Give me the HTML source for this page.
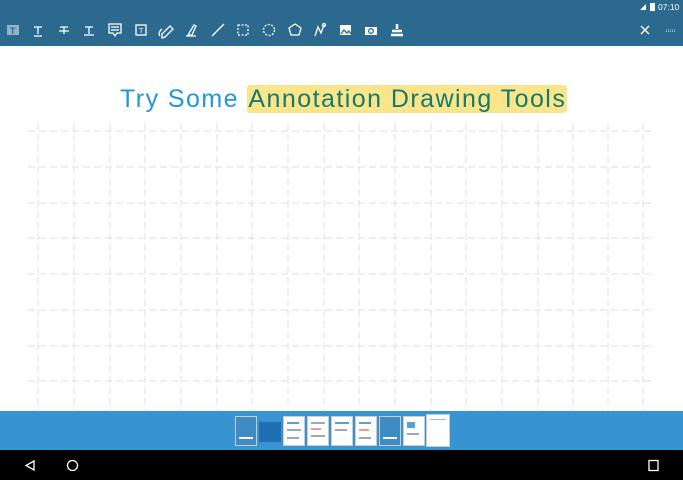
<!DOCTYPE html>
<html><head><meta charset="utf-8"><style>
*{margin:0;padding:0;box-sizing:border-box}
body{width:683px;height:480px;overflow:hidden;background:#fff;font-family:"Liberation Sans",sans-serif;position:relative}
.top{position:absolute;left:0;top:0;width:683px;height:46px;background:#2b6a8e}
.bot{position:absolute;left:0;top:411px;width:683px;height:39px;background:#3793d1}
.nav{position:absolute;left:0;top:450px;width:683px;height:30px;background:#000}
.title{position:absolute;left:120px;top:85px;font-size:25px;color:#2196d8;white-space:nowrap;letter-spacing:1.45px}
.title span{background:#fbe58b;color:#137a70;padding:0 1px;border-radius:3px}
.th{position:absolute;top:416px;height:30px;width:22px;background:#fff;border:1px solid #ccc}
.th i{position:absolute;left:3px;height:2px;background:#9ab;display:block}
</style></head><body>
<div class="top"></div>
<svg style="position:absolute;left:0;top:0" width="683" height="46" fill="none" stroke="#fff" stroke-width="1.3">
<rect x="7" y="25" width="12" height="10" fill="#8fb3c9" stroke="none"/><text x="10" y="34" fill="#2b6a8e" stroke="none" font-size="9" font-weight="bold">T</text>
<path d="M34 27h8M38 27v7M34 36h8"/>
<path d="M60 27h8M64 27v7M59 31h10"/>
<path d="M85 27h8M89 27v7M84 35h10"/>
<path d="M109 24h12v9h-4l-2 3-2-3h-4z M111 27h8M111 30h8"/>
<rect x="136" y="25" width="10" height="10"/><text x="139" y="33" fill="#fff" stroke="none" font-size="7">T</text>
<path d="M162 34l8-8 3 3-8 8-3 1z M160 36c-2-2 0-6 2-7"/>
<path d="M188 35l6-10 2 1-4 9zM186 36h10"/>
<path d="M212 36l12-12"/>
<rect x="238" y="25" width="10" height="10" stroke-dasharray="2 1.5"/>
<circle cx="269" cy="30" r="5.5" stroke-dasharray="2 1.5"/>
<path d="M295 24l6 4-2 7h-8l-2-7z"/>
<path d="M315 36l3-9 3 6 3-8" /><circle cx="324" cy="25" r="1.5"/>
<rect x="340" y="25" width="11" height="10" fill="#fff" stroke="none"/><path d="M341 34l3-4 3 3 2-2 2 3" stroke="#2b6a8e"/>
<rect x="365" y="27" width="12" height="8" fill="#fff" stroke="none"/><circle cx="371" cy="31" r="2.3" stroke="#2b6a8e"/>
<path d="M397 24v5M392 31h10M391 35h12" stroke-width="2.5"/>
<path d="M641 26l8 8M649 26l-8 8"/>
<path d="M666 30h9M666 31.5h9" stroke="#9fbfd3" stroke-width="1" stroke-dasharray="1 1"/>
<path d="M640 10l6-6v6z" fill="#fff" stroke="none"/><rect x="650" y="3" width="5" height="8" fill="#fff" stroke="none"/>
<text x="658" y="10" fill="#fff" stroke="none" font-size="8.5">07:10</text>
</svg>
<div class="title">Try Some <span>Annotation Drawing Tools</span></div>
<svg style="position:absolute;left:0;top:0" width="683" height="411" stroke="#e4e4e4" stroke-width="1.2" stroke-dasharray="7 4">
<path d="M28 131H654M28 167H654M28 203H654M28 238H654M28 274H654M28 310H654M28 346H654M28 381H654"/>
<path d="M38 123V411M74 123V411M110 123V411M145 123V411M181 123V411M217 123V411M252 123V411M288 123V411M324 123V411M359 123V411M395 123V411M431 123V411M466 123V411M502 123V411M538 123V411M573 123V411M608 123V411M643 123V411"/>
</svg>
<div class="bot"></div>
<div class="th" style="left:235px;background:#3d8cc4"><i style="top:20px;width:14px;background:#fff"></i></div>
<div class="th" style="left:259px;top:422px;height:20px;background:#1d6fb0;border:none"></div>
<div class="th" style="left:283px"><i style="top:5px;width:12px;background:#5aa0d0"></i><i style="top:12px;width:14px"></i><i style="top:20px;width:12px"></i></div>
<div class="th" style="left:307px"><i style="top:5px;width:14px"></i><i style="top:11px;width:10px;background:#e99"></i><i style="top:18px;width:14px"></i></div>
<div class="th" style="left:331px"><i style="top:5px;width:14px;background:#5aa0d0"></i><i style="top:12px;width:12px"></i></div>
<div class="th" style="left:355px"><i style="top:5px;width:12px;background:#5aa0d0"></i><i style="top:12px;width:10px;background:#e99"></i><i style="top:20px;width:12px"></i></div>
<div class="th" style="left:379px;background:#3d8cc4"><i style="top:20px;width:14px;background:#fff"></i></div>
<div class="th" style="left:403px"><i style="top:5px;width:8px;background:#5aa0d0;height:6px"></i><i style="top:16px;width:12px"></i></div>
<div class="th" style="left:426px;top:414px;height:33px;width:24px"><i style="top:4px;width:16px;height:1px;background:#9c9"></i></div>
<div class="nav"></div>
<svg style="position:absolute;left:0;top:450px" width="683" height="30" fill="none" stroke="#fff" stroke-width="1.3">
<path d="M34 11l-8 4.5 8 4.5z"/><circle cx="72.5" cy="15.5" r="5"/><rect x="649" y="10.5" width="9" height="10"/>
</svg>
</body></html>
